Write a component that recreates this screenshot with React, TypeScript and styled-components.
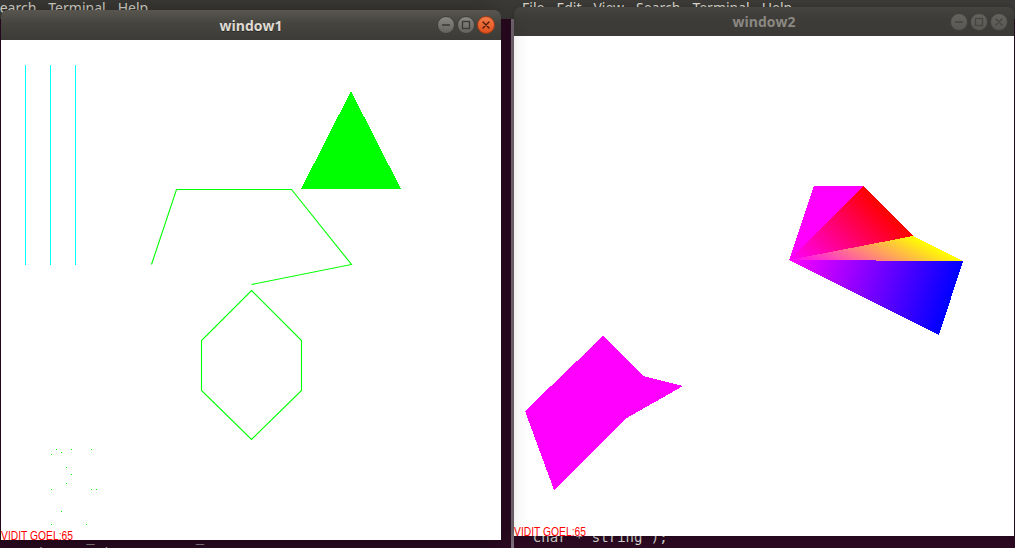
import React from 'react';
import styled, { createGlobalStyle } from 'styled-components';

const GlobalStyle = createGlobalStyle`
  html, body {
    margin: 0;
    padding: 0;
    background: #2c0a22;
    overflow: hidden;
  }
  body {
    font-family: "Open Sans", "Noto Sans", sans-serif;
  }
`;

const Desktop = styled.div`
  position: relative;
  width: 1015px;
  height: 548px;
  overflow: hidden;
  background: #2c0a22;
`;

/* terminal windows lying behind the two GL windows */
const Terminal = styled.div<{ $left: number; $width: number }>`
  position: absolute;
  top: 0;
  left: ${({ $left }) => $left}px;
  width: ${({ $width }) => $width}px;
  height: 548px;
  display: flex;
  flex-direction: column;
  background: #2c0a22;
`;

const MenuBar = styled.div<{ $pad: number }>`
  height: 19px;
  flex: none;
  display: flex;
  align-items: flex-start;
  gap: 12px;
  padding-left: ${({ $pad }) => $pad}px;
  background: #3c3b37;
  color: #dfdbd2;
  font-family: "Noto Sans", "Open Sans", sans-serif;
  font-size: 14px;
  line-height: 15px;
  white-space: nowrap;
`;

const MenuItem = styled.span<{ $shift?: number }>`
  margin-left: ${({ $shift }) => $shift || 0}px;
`;

const TermBody = styled.div<{ $bottom: number; $scroll?: boolean }>`
  flex: 1;
  display: flex;
  flex-direction: column;
  justify-content: flex-end;
  padding-bottom: ${({ $bottom }) => Math.max($bottom, 0)}px;
  margin-bottom: ${({ $bottom }) => Math.min($bottom, 0)}px;
  border-right: ${({ $scroll }) => ($scroll ? '3px solid #7f717d' : 'none')};
  padding-left: 2px;
`;

const TermLine = styled.pre`
  margin: 0;
  font-family: "DejaVu Sans Mono", "Liberation Mono", monospace;
  font-size: 14px;
  line-height: 17px;
  color: #d3d7cf;
`;

/* GL windows */
const Window = styled.div<{ $x: number; $y: number; $active?: boolean }>`
  position: absolute;
  left: ${({ $x }) => $x}px;
  top: ${({ $y }) => $y}px;
  width: 500px;
  display: flex;
  flex-direction: column;
  border-radius: 7px 7px 0 0;
  z-index: ${({ $active }) => ($active ? 2 : 1)};
  box-shadow: ${({ $active }) =>
    $active ? '0 2px 26px rgba(0, 0, 0, 0.45)' : '0 1px 8px rgba(0, 0, 0, 0.3)'};
`;

const TitleBar = styled.div<{ $height: number; $active?: boolean }>`
  height: ${({ $height }) => $height}px;
  display: grid;
  grid-template-columns: 1fr auto 1fr;
  align-items: center;
  border-radius: 7px 7px 0 0;
  background: ${({ $active }) =>
    $active
      ? 'linear-gradient(#58564f, #46443f 45%, #3c3b37)'
      : 'linear-gradient(#45443f, #3d3c38 40%, #3b3a36)'};
`;

const Title = styled.span<{ $active?: boolean }>`
  grid-column: 2;
  font-family: "Open Sans", "Noto Sans", sans-serif;
  font-weight: 700;
  font-size: 14px;
  color: ${({ $active }) => ($active ? '#dfdbd2' : '#8b8882')};
  text-shadow: ${({ $active }) => ($active ? '0 1px 0 rgba(0,0,0,0.4)' : 'none')};
`;

const Controls = styled.div`
  grid-column: 3;
  justify-self: end;
  display: flex;
  gap: 2px;
  padding-right: 6px;
`;

type Kind = 'min' | 'max' | 'close';

const CtrlButton = styled.span<{ $kind: Kind; $active?: boolean }>`
  width: 18px;
  height: 18px;
  box-sizing: border-box;
  border-radius: 50%;
  display: flex;
  align-items: center;
  justify-content: center;
  border: 1px solid
    ${({ $kind, $active }) =>
      !$active ? '#42413d' : $kind === 'close' ? '#9f3a12' : '#3f3e3a'};
  background: ${({ $kind, $active }) =>
    !$active
      ? 'linear-gradient(#64635e, #585752)'
      : $kind === 'close'
        ? 'linear-gradient(#f47b48, #e0501d)'
        : 'linear-gradient(#898782, #65635e)'};
`;

const Canvas = styled.svg`
  display: block;
  width: 500px;
  height: 500px;
  background: #ffffff;
`;

const ControlIcon: React.FC<{ kind: Kind; active?: boolean }> = ({ kind, active }) => {
  const stroke = !active ? '#46453f' : kind === 'close' ? '#4c1d08' : '#3a3935';
  return (
    <svg width="10" height="10" viewBox="0 0 10 10">
      {kind === 'min' && <line x1="1" y1="5" x2="9" y2="5" stroke={stroke} strokeWidth="1.5" />}
      {kind === 'max' && (
        <rect x="1.5" y="1.5" width="7" height="7" fill="none" stroke={stroke} strokeWidth="1.3" />
      )}
      {kind === 'close' && (
        <path d="M2 2 L8 8 M8 2 L2 8" stroke={stroke} strokeWidth="1.4" strokeLinecap="round" />
      )}
    </svg>
  );
};

const WindowControls: React.FC<{ active?: boolean }> = ({ active }) => (
  <Controls>
    {(['min', 'max', 'close'] as Kind[]).map((k) => (
      <CtrlButton key={k} $kind={k} $active={active}>
        <ControlIcon kind={k} active={active} />
      </CtrlButton>
    ))}
  </Controls>
);

const Signature: React.FC = () => (
  <text
    x="0"
    y="500"
    fill="#ff0000"
    fontFamily="'Liberation Sans', Arial, sans-serif"
    fontSize="12.5"
    textLength="72"
    lengthAdjust="spacingAndGlyphs"
  >
    VIDIT GOEL:65
  </text>
);

const dots: [number, number][] = [
  [50, 414], [55, 409], [60, 412], [70, 409], [90, 409],
  [65, 427], [70, 434], [65, 443],
  [50, 449], [90, 449], [95, 449],
  [60, 471], [50, 484], [85, 484],
];

const Scene1: React.FC = () => (
  <Canvas viewBox="0 0 500 500">
    {[24, 49, 74].map((x) => (
      <line
        key={x}
        x1={x + 0.5}
        y1="25"
        x2={x + 0.5}
        y2="225"
        stroke="#00ffff"
        strokeWidth="1"
        shapeRendering="crispEdges"
      />
    ))}
    <polygon points="350,51 300,149 400,149" fill="#00ff00" shapeRendering="crispEdges" />
    <polyline
      points="150.5,224.5 175.5,149.5 290.5,149.5 350.5,224.5 250.5,244.5"
      fill="none"
      stroke="#00ff00"
      strokeWidth="1.1"
    />
    <polygon
      points="250.5,250.5 300.5,300.5 300.5,350.5 250.5,399.5 200.5,350.5 200.5,300.5"
      fill="none"
      stroke="#00ff00"
      strokeWidth="1.1"
    />
    {dots.map(([x, y]) => (
      <rect
        key={`${x}-${y}`}
        x={x}
        y={y}
        width="1"
        height="1"
        fill="#00ff00"
        shapeRendering="crispEdges"
      />
    ))}
    <Signature />
  </Canvas>
);

const Scene2: React.FC = () => (
  <Canvas viewBox="0 0 500 500" shapeRendering="crispEdges">
    <defs>
      <linearGradient id="fanRed" gradientUnits="userSpaceOnUse" x1="275" y1="224" x2="349" y2="150">
        <stop offset="0" stopColor="#ff00ff" />
        <stop offset="1" stopColor="#ff0000" />
      </linearGradient>
      <linearGradient id="fanYellow" gradientUnits="userSpaceOnUse" x1="275" y1="224" x2="309.4" y2="155.2">
        <stop offset="0" stopColor="#ff00ff" />
        <stop offset="1" stopColor="#ffff00" />
      </linearGradient>
      <linearGradient id="fanBlue" gradientUnits="userSpaceOnUse" x1="275" y1="224" x2="432.7" y2="275.2">
        <stop offset="0" stopColor="#ff00ff" />
        <stop offset="1" stopColor="#0000ff" />
      </linearGradient>
    </defs>
    <polygon points="89,300 129,340 169,350 111,383 40,454 11,375" fill="#ff00ff" />
    <polygon points="275,224 300,150 349,150" fill="#ff00ff" />
    <polygon points="275,224 349,150 399,200" fill="url(#fanRed)" />
    <polygon points="275,224 399,200 449,225" fill="url(#fanYellow)" />
    <polygon points="275,224 449,225 425,299" fill="url(#fanBlue)" />
    <Signature />
  </Canvas>
);

const App: React.FC = () => (
  <Desktop>
    <GlobalStyle />
    <Terminal $left={0} $width={514}>
      <MenuBar $pad={0}>
        <MenuItem $shift={-8}>Search</MenuItem>
        <MenuItem>Terminal</MenuItem>
        <MenuItem>Help</MenuItem>
      </MenuBar>
      <TermBody $bottom={-14} $scroll>
        <TermLine>{'          _            _'}</TermLine>
        <TermLine>{'\\   (500,500)'}</TermLine>
      </TermBody>
    </Terminal>
    <Terminal $left={514} $width={501}>
      <MenuBar $pad={8}>
        <MenuItem>File</MenuItem>
        <MenuItem>Edit</MenuItem>
        <MenuItem>View</MenuItem>
        <MenuItem>Search</MenuItem>
        <MenuItem>Terminal</MenuItem>
        <MenuItem>Help</MenuItem>
      </MenuBar>
      <TermBody $bottom={2}>
        <TermLine>{'  char * string );'}</TermLine>
      </TermBody>
    </Terminal>

    <Window $x={1} $y={10} $active>
      <TitleBar $height={30} $active>
        <Title $active>window1</Title>
        <WindowControls active />
      </TitleBar>
      <Scene1 />
    </Window>

    <Window $x={514} $y={7}>
      <TitleBar $height={29}>
        <Title>window2</Title>
        <WindowControls />
      </TitleBar>
      <Scene2 />
    </Window>
  </Desktop>
);

export default App;
